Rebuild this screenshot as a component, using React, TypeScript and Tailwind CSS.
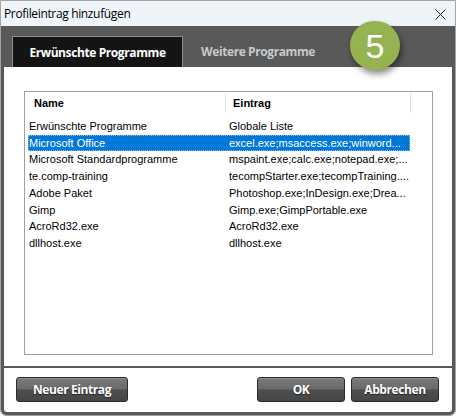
const rows: [string, string][] = [
  ['Erwünschte Programme', 'Globale Liste'],
  ['Microsoft Office', 'excel.exe;msaccess.exe;winword...'],
  ['Microsoft Standardprogramme', 'mspaint.exe;calc.exe;notepad.exe;...'],
  ['te.comp-training', 'tecompStarter.exe;tecompTraining....'],
  ['Adobe Paket', 'Photoshop.exe;InDesign.exe;Drea...'],
  ['Gimp', 'Gimp.exe;GimpPortable.exe'],
  ['AcroRd32.exe', 'AcroRd32.exe'],
  ['dllhost.exe', 'dllhost.exe'],
];

function DarkButton({ label, width }: { label: string; width: string }) {
  return (
    <button
      className={`${width} h-[25px] rounded-[3px] border border-[#2b2b2b] bg-[linear-gradient(#7a7a7a_0%,#6a6a6a_48%,#4e4e4e_52%,#464646_100%)] text-[12px] font-bold tracking-[-0.4px] text-white [text-shadow:0_1px_1px_#222] shadow-[inset_0_1px_0_#8a8a8a]`}
    >
      {label}
    </button>
  );
}

export default function App() {
  return (
    <div className="relative w-[456px] h-[416px] overflow-hidden bg-white font-['Open_Sans',sans-serif]">
      <div className="flex h-full flex-col rounded-b-[6px] border border-[#a3a3a3]">
        {/* title bar */}
        <div className="flex h-[25px] shrink-0 items-center justify-between bg-[#eff4f9] pl-[3px] pr-[9px]">
          <span className="text-[12px] tracking-[-0.35px] text-black">Profileintrag hinzufügen</span>
          <svg width="11" height="11" viewBox="0 0 11 11" className="mt-[1px]">
            <path d="M0.5 0.5 L10.5 10.5 M10.5 0.5 L0.5 10.5" stroke="#1a1a1a" strokeWidth="1" />
          </svg>
        </div>

        <div className="flex flex-1 flex-col rounded-b-[5px] bg-[#595959] px-[3px] pb-[3px]">
          {/* tabs */}
          <div className="flex h-[41px] shrink-0 items-end pl-[8px]">
            <div className="flex h-[31px] w-[171px] items-center justify-center border border-b-0 border-[#8f8f8f] bg-[#141414] pt-[1px] text-[12px] font-bold tracking-[-0.4px] text-white">
              Erwünschte Programme
            </div>
            <div className="flex h-[31px] items-center pl-[18px] pt-[1px] text-[12px] font-bold tracking-[-0.4px] text-[#c6c9cc]">
              Weitere Programme
            </div>
          </div>

          {/* list panel */}
          <div className="h-[299px] shrink-0 bg-white pl-[20px] pt-[24px]">
            <div className="h-[264px] w-[409px] border border-[#a0a0a0] font-['Liberation_Sans',Arial,sans-serif] text-[11px] text-black">
              <div className="flex h-[22px] items-center">
                <div className="w-[200px] pl-[9px] font-bold">Name</div>
                <div className="h-[20px] w-px bg-[#e3e3e3]" />
                <div className="w-[184px] pl-[7px] font-bold">Eintrag</div>
                <div className="h-[20px] w-px bg-[#e3e3e3]" />
              </div>
              <div className="pt-[4px]">
                {rows.map(([name, entry], i) => (
                  <div
                    key={name}
                    className={`ml-[3px] flex h-[16.7px] w-[382px] items-center ${
                      i === 1 ? 'bg-[#0078d7] text-white outline-1 outline-dotted outline-offset-[-1px] outline-[#8fb8e0]' : ''
                    }`}
                  >
                    <div className="w-[197px] pl-[1px] whitespace-nowrap">{name}</div>
                    <div className="pl-[4px] whitespace-nowrap">{entry}</div>
                  </div>
                ))}
              </div>
            </div>
          </div>

          <div className="h-[2px] shrink-0" />

          {/* buttons */}
          <div className="flex flex-1 items-start justify-between rounded-b-[3px] bg-white pl-[12px] pr-[13px] pt-[9px]">
            <DarkButton label="Neuer Eintrag" width="w-[112px]" />
            <div className="flex gap-[6px]">
              <DarkButton label="OK" width="w-[88px]" />
              <DarkButton label="Abbrechen" width="w-[88px]" />
            </div>
          </div>
        </div>
      </div>

      {/* step badge */}
      <div className="absolute left-[350px] top-[21px] flex h-[49px] w-[50px] items-center justify-center rounded-full bg-[#95b350] font-['Liberation_Sans',Arial,sans-serif] text-[34px] leading-none text-white shadow-[2px_4px_6px_rgba(0,0,0,0.45)]">
        5
      </div>
    </div>
  );
}
